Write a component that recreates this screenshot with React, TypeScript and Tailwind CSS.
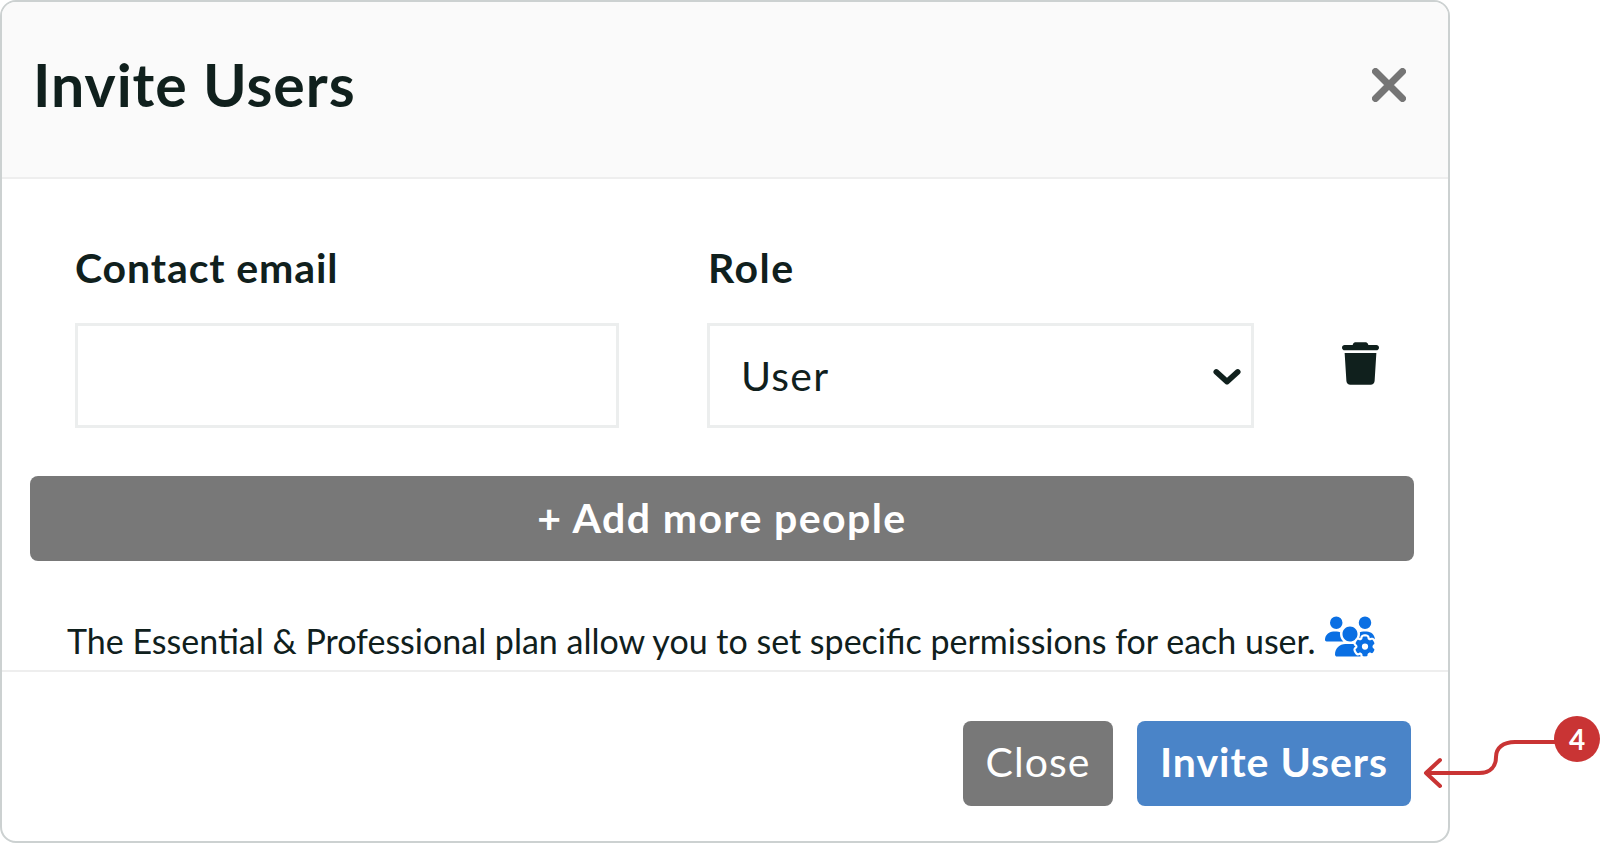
import { FaTrash, FaUsersGear } from "react-icons/fa6";

function CloseIcon() {
  return (
    <svg viewBox="0 0 34 34" className="h-[34px] w-[34px]" fill="none" stroke="#757575" strokeWidth="7" strokeLinecap="round">
      <path d="M3.5 3.5 30.5 30.5M30.5 3.5 3.5 30.5" />
    </svg>
  );
}

function Chevron() {
  return (
    <svg viewBox="0 0 30 18" className="h-[18px] w-[28px]" fill="none" stroke="#10201d" strokeWidth="6" strokeLinecap="round" strokeLinejoin="round">
      <path d="M3.5 3.5 15 14 26.5 3.5" />
    </svg>
  );
}

export default function App() {
  return (
    <div className="relative h-[843px] w-[1600px] overflow-hidden bg-white font-['Lato','Noto_Sans',sans-serif] text-[#10201d]">
      {/* Modal */}
      <div className="flex h-[843px] w-[1450px] flex-col overflow-hidden rounded-[16px] border-2 border-[#ccd1d1] bg-white">
        <header className="flex h-[177px] shrink-0 items-center justify-between border-b-2 border-[#eeeeee] bg-[#fafafa] pb-[10px] pl-[31px] pr-[42px]">
          <h1 className="text-[59px] font-bold leading-none tracking-[0.95px]">Invite Users</h1>
          <CloseIcon />
        </header>

        <div className="flex h-[493px] shrink-0 flex-col border-b-2 border-[#eeeeee] px-[28px]">
          <div className="flex pl-[45px] pt-[64px]">
            <div className="w-[632px]">
              <div className="text-[41px] font-bold leading-[50px] tracking-[0.9px]">Contact email</div>
              <div className="mt-[30px] h-[105px] w-[544px] border-[3px] border-[#eceeee] bg-white" />
            </div>
            <div className="w-[547px]">
              <div className="pl-[1px] text-[41px] font-bold leading-[50px] tracking-[1.5px]">Role</div>
              <div className="mt-[30px] flex h-[105px] w-[547px] items-center justify-between border-[3px] border-[#eceeee] bg-white pl-[31px] pr-[10px]">
                <span className="text-[41px] leading-none tracking-[1.2px]">User</span>
                <span className="pt-[2px]"><Chevron /></span>
              </div>
            </div>
            <div className="ml-[88px] pt-[99px]">
              <FaTrash className="h-[43px] w-[37px] text-[#10201d]" />
            </div>
          </div>

          <button className="mt-[48px] h-[85px] w-[1384px] rounded-[8px] bg-[#787878] pb-[3px] text-[41px] font-bold leading-none tracking-[1.4px] text-white">
            + Add more people
          </button>

          <div className="mt-[57px] flex items-center pl-[37px]">
            <span className="text-[34px] leading-[46px]">The Essential &amp; Professional plan allow you to set specific permissions for each user.</span>
            <FaUsersGear className="ml-[9px] mt-[-9px] h-[43px] w-[50px] text-[#0a6fe3]" />
          </div>
        </div>

        <footer className="flex flex-1 items-start justify-end gap-[24px] pr-[37px] pt-[49px]">
          <button className="h-[85px] w-[150px] rounded-[8px] bg-[#787878] pb-[5px] text-[41px] leading-none tracking-[1.1px] text-white">Close</button>
          <button className="h-[85px] w-[274px] rounded-[8px] bg-[#4a84c8] pb-[5px] text-[41px] font-bold leading-none tracking-[1px] text-white">Invite Users</button>
        </footer>
      </div>

      {/* Callout */}
      <svg className="absolute left-[1415px] top-[730px] h-[70px] w-[150px]" viewBox="0 0 150 70" fill="none" stroke="#c93434" strokeWidth="4" strokeLinecap="round" strokeLinejoin="round">
        <path d="M145 12H100C88 12 81 18 81 27C81 36 76 43 64 43H12M25 30 11 43 25 56" />
      </svg>
      <div className="absolute left-[1554px] top-[716px] flex h-[46px] w-[46px] items-center justify-center rounded-full bg-[#c93434] text-[28px] font-bold leading-none text-white">
        4
      </div>
    </div>
  );
}
